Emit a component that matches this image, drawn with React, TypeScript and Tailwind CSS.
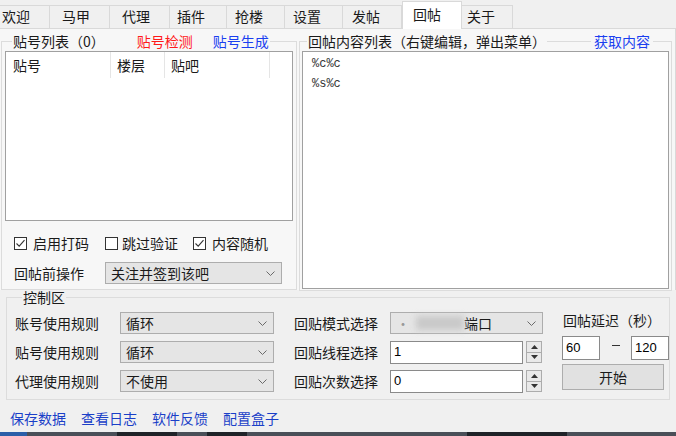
import React from "react";

const tabs: { label: string; cls: string; sel?: boolean }[] = [
  { label: "欢迎", cls: "w-[50px] pl-[2px]" },
  { label: "马甲", cls: "w-[60px] pl-[12px]" },
  { label: "代理", cls: "w-[60px] pl-[12px]" },
  { label: "插件", cls: "w-[57px] pl-[7px]" },
  { label: "抢楼", cls: "w-[58px] pl-[8px]" },
  { label: "设置", cls: "w-[58px] pl-[8px]" },
  { label: "发帖", cls: "w-[59px] pl-[9px]" },
  { label: "回帖", cls: "w-[60px] pl-[10px]", sel: true },
  { label: "关于", cls: "w-[51px] pl-[5px]" },
];

function Chevron() {
  return (
    <svg width="9" height="5" viewBox="0 0 9 5" className="shrink-0">
      <path d="M0.5 0.5 L4.5 4.5 L8.5 0.5" fill="none" stroke="#6a6a6a" strokeWidth="1" />
    </svg>
  );
}

function Combo({ cls, children }: { cls: string; children: React.ReactNode }) {
  return (
    <div className={`flex h-[22px] items-center justify-between border border-[#adadad] bg-[#e5e5e5] pl-[5px] pr-[6px] leading-[20px] ${cls}`}>
      <div className="flex items-center">{children}</div>
      <Chevron />
    </div>
  );
}

function Check({ checked }: { checked: boolean }) {
  return (
    <span className="flex h-[13px] w-[13px] shrink-0 items-center justify-center border border-[#333333] bg-white">
      {checked && (
        <svg width="11" height="11" viewBox="0 0 11 11">
          <path d="M1.5 5.5 L4.2 8.2 L9.5 2.2" fill="none" stroke="#333333" strokeWidth="1.1" />
        </svg>
      )}
    </span>
  );
}

function Spinner() {
  return (
    <div className="ml-[3px] flex h-[22px] w-[16px] flex-col border border-[#acacac] bg-[#e9e9e9]">
      <div className="flex flex-1 items-center justify-center border-b border-[#acacac]">
        <svg width="7" height="4" viewBox="0 0 7 4">
          <path d="M0 4 L3.5 0 L7 4 Z" fill="#333333" />
        </svg>
      </div>
      <div className="flex flex-1 items-center justify-center">
        <svg width="7" height="4" viewBox="0 0 7 4">
          <path d="M0 0 L3.5 4 L7 0 Z" fill="#333333" />
        </svg>
      </div>
    </div>
  );
}

function NumInput({ value }: { value: string }) {
  return (
    <div className="flex items-center">
      <div className="flex h-[23px] w-[133px] items-center border border-[#8a8a8a] bg-white pl-[3px] font-['Liberation_Sans',sans-serif] text-[13px] text-black">
        {value}
      </div>
      <Spinner />
    </div>
  );
}

export default function App() {
  return (
    <div className="flex h-[436px] w-[676px] flex-col overflow-hidden bg-[#f0f0f0] font-['Noto_Sans_CJK_SC',sans-serif] text-[14px] text-[#1a1a1a]">
      {/* tab strip */}
      <div className="flex h-[28px] shrink-0 items-end">
        {tabs.map((t) =>
          t.sel ? (
            <div
              key={t.label}
              className={`relative z-10 -mb-px h-[28px] border-x border-t border-[#d9d9d9] bg-white leading-[25px] ${t.cls}`}
            >
              {t.label}
            </div>
          ) : (
            <div
              key={t.label}
              className={`h-[23px] border-r border-t border-[#d9d9d9] bg-[#f0f0f0] leading-[21px] ${t.cls}`}
            >
              {t.label}
            </div>
          )
        )}
      </div>

      {/* tab page */}
      <div className="flex h-[262px] shrink-0 gap-[2px] border-r border-t border-[#d9d9d9] bg-[#f7f7f7] pl-[1px] pt-[3px]">
        {/* left group */}
        <fieldset className="w-[296px] self-start border border-[#dcdcdc] px-[3px] pb-[5px]">
          <legend className="ml-[7px] flex px-[1px] leading-[18px]">
            <span>贴号列表（0）</span>
            <span className="ml-[32px] text-[#ff1a1a]">贴号检测</span>
            <span className="ml-[20px] text-[#1a3ff0]">贴号生成</span>
          </legend>
          <div className="mt-[1px] flex h-[170px] flex-col border border-[#a0a0a0] bg-white">
            <div className="flex h-[26px] leading-[26px]">
              <div className="w-[105px] border-r border-[#e5e5e5] pl-[7px]">贴号</div>
              <div className="w-[54px] border-r border-[#e5e5e5] pl-[6px]">楼层</div>
              <div className="w-[105px] border-r border-[#e5e5e5] pl-[6px]">贴吧</div>
            </div>
          </div>
          <div className="mt-[12px] flex h-[20px] items-center pl-[9px] leading-[20px]">
            <Check checked />
            <span className="ml-[6px]">启用打码</span>
            <span className="ml-[16px]">
              <Check checked={false} />
            </span>
            <span className="ml-[4px]">跳过验证</span>
            <span className="ml-[15px]">
              <Check checked />
            </span>
            <span className="ml-[6px]">内容随机</span>
          </div>
          <div className="mt-[9px] flex items-center pl-[9px]">
            <span className="w-[91px] leading-[20px]">回帖前操作</span>
            <Combo cls="w-[177px]">关注并签到该吧</Combo>
          </div>
        </fieldset>

        {/* right group */}
        <fieldset className="w-[373px] self-start border border-[#dcdcdc] px-[2px] pb-[1px]">
          <legend className="ml-[5px] flex items-center leading-[18px]">
            <span className="px-[1px]">回帖内容列表（右键编辑，弹出菜单）</span>
            <span className="h-[1px] w-[44px] bg-[#dcdcdc]" />
            <span className="px-[3px] text-[#1a3ff0]">获取内容</span>
          </legend>
          <div className="mt-[1px] flex h-[238px] flex-col border border-[#a0a0a0] bg-white pl-[9px] pt-[2px] font-['Liberation_Mono',monospace] text-[12px] leading-[20px] text-[#333333]">
            <div>%c%c</div>
            <div>%s%c</div>
          </div>
        </fieldset>
      </div>

      {/* control area */}
      <fieldset className="ml-[6px] mt-[-2px] w-[664px] shrink-0 border border-[#dcdcdc] pb-[7px] pl-[8px]">
        <legend className="ml-[7px] px-[1px] leading-[18px]">控制区</legend>
        <div className="flex pt-[6px]">
          <div className="flex flex-col gap-[7px]">
            <div className="flex h-[22px] items-center">
              <span className="w-[105px]">账号使用规则</span>
              <Combo cls="w-[154px]">循环</Combo>
              <span className="ml-[20px] w-[96px]">回贴模式选择</span>
              <Combo cls="w-[153px]">
                <span className="text-[#999999]">·</span>
                <span className="ml-[6px] h-[14px] w-[48px] bg-[#c9c9c9] blur-[3px]" />
                <span>端口</span>
              </Combo>
            </div>
            <div className="flex h-[22px] items-center">
              <span className="w-[105px]">贴号使用规则</span>
              <Combo cls="w-[154px]">循环</Combo>
              <span className="ml-[20px] w-[96px]">回贴线程选择</span>
              <NumInput value="1" />
            </div>
            <div className="flex h-[22px] items-center">
              <span className="w-[105px]">代理使用规则</span>
              <Combo cls="w-[154px]">不使用</Combo>
              <span className="ml-[20px] w-[96px]">回贴次数选择</span>
              <NumInput value="0" />
            </div>
          </div>
          <div className="ml-[19px] flex w-[106px] flex-col">
            <div className="mt-[-2px] h-[20px] pl-[1px] leading-[20px]">回帖延迟（秒）</div>
            <div className="mt-[6px] flex h-[24px] items-center">
              <div className="flex h-[24px] w-[38px] items-center border border-[#8a8a8a] bg-white pl-[3px] font-['Liberation_Sans',sans-serif] text-[13px] text-black">
                60
              </div>
              <div className="mx-auto mb-[6px] h-[1px] w-[8px] bg-[#333333]" />
              <div className="mr-[-1px] flex h-[24px] w-[38px] items-center border border-[#8a8a8a] bg-white pl-[3px] font-['Liberation_Sans',sans-serif] text-[13px] text-black">
                120
              </div>
            </div>
            <div className="mt-[4px] flex h-[26px] w-[102px] items-center justify-center border border-[#adadad] bg-[#e1e1e1]">
              开始
            </div>
          </div>
        </div>
      </fieldset>

      {/* bottom links */}
      <div className="mt-[8px] flex gap-[15px] pl-[10px] leading-[20px] text-[#1a3fc8]">
        <span>保存数据</span>
        <span>查看日志</span>
        <span>软件反馈</span>
        <span>配置盒子</span>
      </div>

      {/* bottom strip (underlying window) */}
      <div className="mt-auto flex h-[4px] shrink-0 bg-[#4a4f58]">
        <div className="h-full w-[27px] bg-[#2b5ea8]" />
        <div className="ml-[90px] h-full w-[60px] bg-[#1f2328]" />
        <div className="ml-[30px] h-full w-[40px] bg-[#1f2328]" />
        <div className="ml-[220px] h-full w-[100px] bg-[#1f2328]" />
      </div>
    </div>
  );
}
